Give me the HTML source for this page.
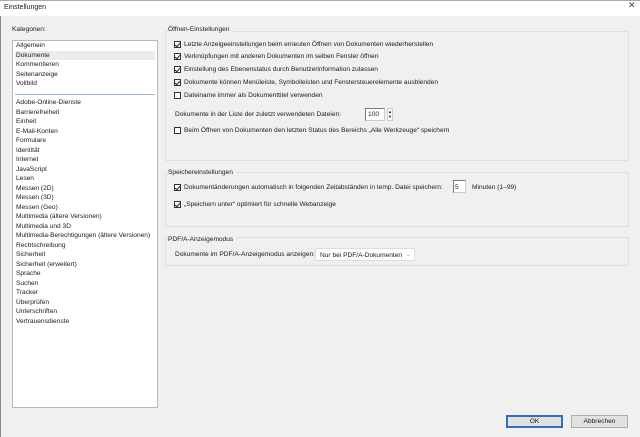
<!DOCTYPE html>
<html><head><meta charset="utf-8"><style>
*{margin:0;padding:0;box-sizing:border-box}
body{width:640px;height:437px;background:#f0f0f0;font-family:"Liberation Sans",sans-serif;font-size:6.6px;color:#1a1a1a;position:relative;overflow:hidden}
.a{position:absolute;white-space:nowrap;line-height:9px}
.title{left:0;top:0;width:640px;height:16px;background:#fff;border-top:1px solid #aaa}
.list{left:12px;top:40px;width:146px;height:368px;background:#fff;border:1px solid #b8b8b8}
.it{position:absolute;left:2px;width:140px;height:9.5px;line-height:9.5px;padding-left:1px}
.panel{position:absolute;left:165px;width:464px;border:1px solid #dedede;border-radius:2px}
.pt{background:#f0f0f0;padding-right:3px}
.cb{position:absolute;width:7px;height:7px;border:1px solid #333;background:#fff}
.cb.c::after{content:"";position:absolute;left:1px;top:0px;width:2px;height:4px;border:solid #222;border-width:0 1px 1px 0;transform:rotate(40deg)}
.inp{position:absolute;background:#fff;border:1px solid #7a7a7a;border-right-color:#ccc;border-bottom-color:#ccc}
.btn{position:absolute;top:415px;height:13px;width:57px;background:#e1e1e1;border:1px solid #adadad;text-align:center;line-height:11px}
</style></head><body>
<div class="a title"></div>
<div class="a" style="left:4px;top:3px;font-size:7px">Einstellungen</div>
<div class="a" style="left:628px;top:1px;font-size:9px;color:#444">✕</div>
<div class="a" style="left:0;top:16px;width:1px;height:421px;background:#888"></div>
<div class="a" style="left:12px;top:25px">Kategorien:</div>
<div class="a list">
<div class="it" style="top:0">Allgemein</div>
<div class="it" style="top:9.5px;background:#ececec">Dokumente</div>
<div class="it" style="top:19px">Kommentieren</div>
<div class="it" style="top:28.5px">Seitenanzeige</div>
<div class="it" style="top:38px">Vollbild</div>
<div style="position:absolute;left:2px;top:53px;width:140px;height:1px;background:#9ab8d8"></div>
<div style="position:absolute;left:0;top:57px">
<div class="it" style="top:0">Adobe-Online-Dienste</div>
<div class="it" style="top:9.52px">Barrierefreiheit</div>
<div class="it" style="top:19.04px">Einheit</div>
<div class="it" style="top:28.56px">E-Mail-Konten</div>
<div class="it" style="top:38.08px">Formulare</div>
<div class="it" style="top:47.6px">Identität</div>
<div class="it" style="top:57.12px">Internet</div>
<div class="it" style="top:66.64px">JavaScript</div>
<div class="it" style="top:76.16px">Lesen</div>
<div class="it" style="top:85.68px">Messen (2D)</div>
<div class="it" style="top:95.2px">Messen (3D)</div>
<div class="it" style="top:104.72px">Messen (Geo)</div>
<div class="it" style="top:114.24px">Multimedia (ältere Versionen)</div>
<div class="it" style="top:123.76px">Multimedia und 3D</div>
<div class="it" style="top:133.28px">Multimedia-Berechtigungen (ältere Versionen)</div>
<div class="it" style="top:142.8px">Rechtschreibung</div>
<div class="it" style="top:152.32px">Sicherheit</div>
<div class="it" style="top:161.84px">Sicherheit (erweitert)</div>
<div class="it" style="top:171.36px">Sprache</div>
<div class="it" style="top:180.88px">Suchen</div>
<div class="it" style="top:190.4px">Tracker</div>
<div class="it" style="top:199.92px">Überprüfen</div>
<div class="it" style="top:209.44px">Unterschriften</div>
<div class="it" style="top:218.96px">Vertrauensdienste</div>
</div>
</div>

<div class="panel" style="top:31px;height:130px"></div>
<div class="a pt" style="left:168px;top:25px">Öffnen-Einstellungen</div>
<div class="cb c" style="left:174px;top:41px"></div><div class="a" style="left:184px;top:40px">Letzte Anzeigeeinstellungen beim erneuten Öffnen von Dokumenten wiederherstellen</div>
<div class="cb c" style="left:174px;top:53px"></div><div class="a" style="left:184px;top:52px">Verknüpfungen mit anderen Dokumenten im selben Fenster öffnen</div>
<div class="cb c" style="left:174px;top:66px"></div><div class="a" style="left:184px;top:65px">Einstellung des Ebenenstatus durch Benutzerinformation zulassen</div>
<div class="cb c" style="left:174px;top:79px"></div><div class="a" style="left:184px;top:78px">Dokumente können Menüleiste, Symbolleisten und Fenstersteuerelemente ausblenden</div>
<div class="cb" style="left:174px;top:92px"></div><div class="a" style="left:184px;top:91px">Dateiname immer als Dokumenttitel verwenden</div>
<div class="a" style="left:175px;top:110px">Dokumente in der Liste der zuletzt verwendeten Dateien:</div>
<div class="inp" style="left:365px;top:108px;width:20px;height:13px"></div><div class="a" style="left:368px;top:110px">100</div>
<div class="a" style="left:387px;top:108px;width:6px;height:13px;border:1px solid #ccc;background:#fff;font-size:4px;line-height:5px;text-align:center">▲<br>▼</div>
<div class="cb" style="left:174px;top:127px"></div><div class="a" style="left:184px;top:126px">Beim Öffnen von Dokumenten den letzten Status des Bereichs „Alle Werkzeuge“ speichern</div>

<div class="panel" style="top:172px;height:55px"></div>
<div class="a pt" style="left:168px;top:168px">Speichereinstellungen</div>
<div class="cb c" style="left:174px;top:184px"></div><div class="a" style="left:184px;top:183px">Dokumentänderungen automatisch in folgenden Zeitabständen in temp. Datei speichern:</div>
<div class="inp" style="left:453px;top:180px;width:13px;height:13px"></div><div class="a" style="left:455px;top:183px">5</div>
<div class="a" style="left:472px;top:183px">Minuten (1–99)</div>
<div class="cb c" style="left:174px;top:201px"></div><div class="a" style="left:184px;top:200px">„Speichern unter“ optimiert für schnelle Webanzeige</div>

<div class="panel" style="top:237px;height:29px"></div>
<div class="a pt" style="left:168px;top:235px">PDF/A-Anzeigemodus</div>
<div class="a" style="left:175px;top:250px">Dokumente im PDF/A-Anzeigemodus anzeigen:</div>
<div class="a" style="left:315px;top:248px;width:100px;height:13px;background:#fff;border:1px solid #ddd;padding:2px 0 0 4px">Nur bei PDF/A-Dokumenten<span style="position:absolute;right:3px;top:1px;color:#999">⌄</span></div>

<div class="btn" style="left:506px;border:2px solid #2f70b8;line-height:9px">OK</div>
<div class="btn" style="left:571px">Abbrechen</div>
</body></html>
